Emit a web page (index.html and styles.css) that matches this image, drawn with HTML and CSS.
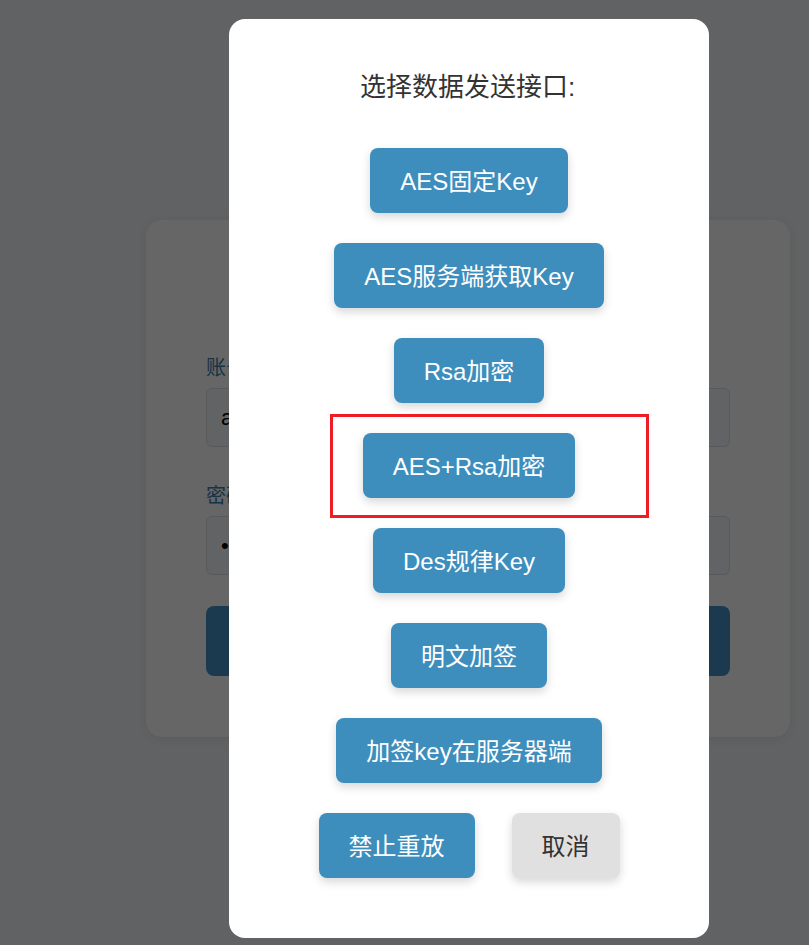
FILE: index.html
```html
<!DOCTYPE html>
<html lang="zh-CN">
<head>
<meta charset="utf-8">
<title>选择数据发送接口</title>
<link rel="stylesheet" href="styles.css">
</head>
<body>
<div class="page">
  <div class="login-card">
    <div class="field">
      <label class="field-label">账号</label>
      <div class="field-input">admin</div>
    </div>
    <div class="field">
      <label class="field-label">密码</label>
      <div class="field-input">••••••</div>
    </div>
    <button class="login-btn">登录</button>
  </div>
</div>

<div class="overlay">
  <div class="modal">
    <h2 class="modal-title">选择数据发送接口:</h2>
    <div class="modal-actions">
      <button class="btn">AES固定Key</button>
      <button class="btn">AES服务端获取Key</button>
      <button class="btn">Rsa加密</button>
      <button class="btn">AES+Rsa加密</button>
      <button class="btn">Des规律Key</button>
      <button class="btn">明文加签</button>
      <button class="btn">加签key在服务器端</button>
      <div class="btn-row">
        <button class="btn">禁止重放</button>
        <button class="btn btn-cancel">取消</button>
      </div>
    </div>
    <div class="highlight"></div>
  </div>
</div>
</body>
</html>
```

FILE: styles.css
```css
* { box-sizing: border-box; }

html, body {
  margin: 0;
  padding: 0;
  height: 100%;
}

body {
  background: #f3f5f7;
  font-family: "Liberation Sans", "Noto Sans CJK SC", sans-serif;
  overflow: hidden;
}

.page {
  padding-top: 220px;
  padding-left: 146px;
}

.login-card {
  width: 644px;
  height: 517px;
  background: #ffffff;
  border-radius: 16px;
  box-shadow: 0 2px 12px rgba(0, 0, 0, 0.08);
  padding: 134px 60px 0;
  display: flex;
  flex-direction: column;
}

.field {
  display: flex;
  flex-direction: column;
  margin-bottom: 35px;
}

.field:last-of-type {
  margin-bottom: 31px;
}

.field-label {
  color: #3a7fae;
  font-size: 20px;
  line-height: 28px;
  margin-bottom: 6px;
}

.field-input {
  height: 59px;
  border: 1px solid #dcdfe6;
  border-radius: 6px;
  background: #f5f7fa;
  padding: 0 14px;
  display: flex;
  align-items: center;
  font-size: 22px;
  color: #000;
}

.login-btn {
  height: 70px;
  border: none;
  border-radius: 8px;
  background: #4691c6;
  color: #fff;
  font-size: 22px;
  font-family: inherit;
}

.overlay {
  position: fixed;
  inset: 0;
  background: rgba(0, 0, 0, 0.6);
  padding: 19px 0 0 229px;
}

.modal {
  position: relative;
  width: 480px;
  height: 919px;
  background: #ffffff;
  border-radius: 16px;
  padding: 50px 0 60px;
  display: flex;
  flex-direction: column;
  align-items: center;
}

.modal-title {
  margin: 0 0 43px;
  padding-right: 3px;
  font-size: 26px;
  line-height: 36px;
  font-weight: normal;
  color: #333333;
}

.modal-actions {
  display: flex;
  flex-direction: column;
  align-items: center;
  gap: 30px;
}

.btn {
  height: 65px;
  padding: 3px 30px 0;
  border: none;
  border-radius: 8px;
  background: #3d8ebd;
  color: #ffffff;
  font-family: "Liberation Sans", "Noto Sans CJK SC", sans-serif;
  font-size: 24px;
  line-height: 1;
  box-shadow: 0 4px 10px rgba(0, 0, 0, 0.16);
  cursor: pointer;
}

.btn-row {
  display: flex;
  gap: 37px;
}

.btn-cancel {
  background: #e0e0e0;
  color: #333333;
}

.highlight {
  position: absolute;
  left: 101px;
  top: 395px;
  width: 319px;
  height: 104px;
  border: 3px solid #ee1c25;
  pointer-events: none;
}
```
